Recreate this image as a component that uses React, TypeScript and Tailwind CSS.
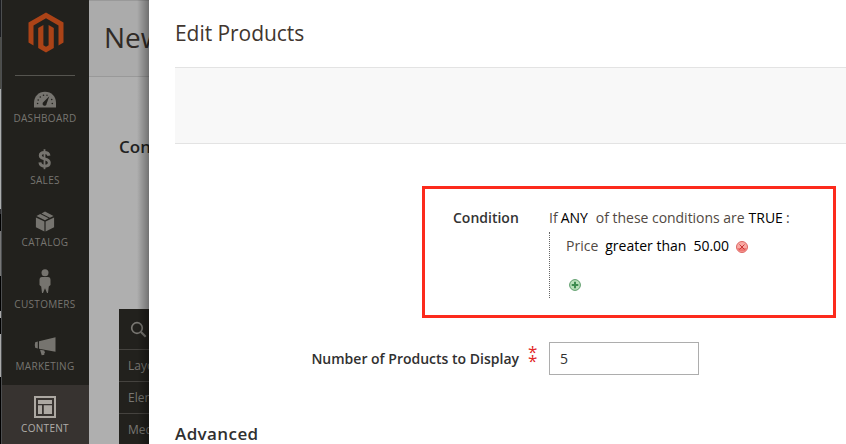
import type { ReactNode } from "react";

function NavItem({ label, active, children }: { label: string; active?: boolean; children: ReactNode }) {
  return (
    <li
      className={
        "flex h-[62px] flex-col items-center pr-px " + (active ? "bg-[#373330] text-[#aca8a2]" : "text-[#76746f]")
      }
    >
      <div className="flex h-[36px] w-full items-end justify-center">{children}</div>
      <span className={"text-[10px] leading-[14px] tracking-[0.3px] " + (active ? "text-[#b0aeaa]" : "text-[#777570]")}>
        {label}
      </span>
    </li>
  );
}

function Logo() {
  return (
    <svg width="36" height="41" viewBox="0 0 36 41" fill="#ab4317">
      <path d="M18 .5 35.500 10.500v20l-5 3V13.400L18 6.200 5.500 13.400v20.100l-5-3v-20z" />
      <path d="m10.200 16 5.200-2.900v20.200L18 34.800l2.600-1.500V13.100l5.200 2.900v20L18 40.500 10.200 36z" />
    </svg>
  );
}

function Sidebar() {
  return (
    <nav className="flex w-[87px] shrink-0 flex-col bg-[#22211d]">
      <div className="flex h-[75px] shrink-0 justify-center pt-[12px]">
        <Logo />
      </div>
      <div className="ml-[13px] h-px w-[60px] shrink-0 bg-[#55544f]" />
      <ul className="-mt-px flex shrink-0 flex-col">
        <NavItem label="DASHBOARD">
          <svg width="22" height="20" viewBox="0 0 22 20" fill="currentColor">
            <path d="M0 16.500V12C0 5.500 4.500.8 11 .8S22 5.500 22 12v4.500z" />
            <g fill="#22211d">
              <path d="m15.300 5.200-2.700 7.500a2 2 0 1 1-3.100-1.600z" />
              <circle cx="3.600" cy="12.500" r=".8" /><circle cx="4.200" cy="9" r=".8" />
              <circle cx="6.300" cy="6" r=".8" /><circle cx="9.500" cy="4.200" r=".8" />
              <circle cx="13" cy="4.200" r=".7" /><circle cx="17.700" cy="8.500" r=".8" />
              <circle cx="18.300" cy="12.500" r=".8" />
            </g>
          </svg>
        </NavItem>
        <NavItem label="SALES">
          <svg width="14" height="24" viewBox="0 0 14 24" fill="none" stroke="currentColor">
            <path d="M6.500 .2v20" strokeWidth="1.800" />
            <path d="M11 6.800C10.600 4.500 9 3.600 6.500 3.600c-2.600 0-4.200 1.100-4.200 3 0 2 1.500 2.700 4.300 3.300 3.100.7 4.700 1.600 4.700 3.900 0 2.200-1.900 3.400-4.700 3.400S2.200 16 1.900 13.400" strokeWidth="3" />
          </svg>
        </NavItem>
        <NavItem label="CATALOG">
          <svg width="20" height="24" viewBox="0 0 20 24" fill="currentColor">
            <path d="M.9 6.400 9.400 10.600v10L.9 16.200zM10.600 10.600l8.500-4.200v9.800l-8.500 4.400zM5.200 3l8.400 4.300-3.600 1.900L1.500 5zM10 .6 18.500 5l-3.600 1.700-8.400-4.300z" />
          </svg>
        </NavItem>
        <NavItem label="CUSTOMERS">
          <svg width="12" height="28" viewBox="0 0 12 28" fill="currentColor">
            <circle cx="6" cy="3.800" r="3.500" />
            <path d="M3 8h6q2.500.2 2.500 3v5L9.800 17.500 9 24H8L6 19.200 4 24H3l-.8-6.500L.5 16v-5Q.5 8.200 3 8z" />
          </svg>
        </NavItem>
        <NavItem label="MARKETING">
          <svg width="22" height="22" viewBox="0 0 22 22" fill="currentColor">
            <path d="M21.500.3v14.500L5 11.800V4.200zM3.800 4.500v7L1.200 10.700Q.4 8 1.200 5.300zM6 12.700l4.300.8L11 16l-1 .7.500 1-2.800.5z" />
          </svg>
        </NavItem>
        <NavItem label="CONTENT" active>
          <svg width="22" height="25" viewBox="0 0 22 25" fill="currentColor">
            <path fillRule="evenodd" d="M0 0h22v22H0zM2 2v18h18V2z" />
            <path d="M4 4h14v4H4zM4 9.300h4V18H4zM9.800 9.300H18V18H9.800z" />
          </svg>
        </NavItem>
      </ul>
    </nav>
  );
}

function BackgroundPage() {
  return (
    <main className="flex min-w-0 grow flex-col bg-[#afafaf]">
      <header className="h-[77px] border-t border-b border-t-[#999] border-b-[#999] bg-[#ababab] pl-[15px] pt-[16px] text-[28px] leading-[40px] text-[#302a26]">
        New Page
      </header>
      <h2 className="pl-[30px] pt-[58px] text-[17px] font-semibold leading-[24px] text-[#222]">Content</h2>
      <aside className="ml-[30px] mt-[150px] w-[200px] grow bg-[#22211d] text-[12px] text-[#797772]">
        <div className="flex h-[41px] border-b border-[#45433f] pl-[11px] pt-[12px]">
          <svg width="17" height="17" viewBox="0 0 17 17" fill="none" stroke="currentColor">
            <circle cx="7" cy="7" r="5.300" strokeWidth="1.700" />
            <path d="m11 11 4.700 4.700" strokeWidth="2.200" />
          </svg>
        </div>
        <div className="h-[32px] border-b border-[#45433f] pl-[9px] leading-[31px]">Layout</div>
        <div className="h-[32px] border-b border-[#45433f] pl-[9px] leading-[31px]">Elements</div>
        <div className="h-[30px] pl-[9px] leading-[31px]">Media</div>
      </aside>
    </main>
  );
}

function RemoveIcon() {
  return (
    <svg width="13" height="13" viewBox="0 0 13 13" className="ml-[6px] mt-[8px] shrink-0">
      <circle cx="7" cy="7" r="5.500" fill="#f9aaa4" stroke="#dc6764" />
      <path d="M2.200 8h9.600a5 5 0 0 1-9.600 0z" fill="#ef7773" />
      <path d="m4.500 4.500 5 5m0-5-5 5" stroke="#c93636" strokeWidth="1" />
    </svg>
  );
}

function AddIcon() {
  return (
    <svg width="12" height="12" viewBox="0 0 12 12">
      <circle cx="6" cy="6" r="5.400" fill="#b9dfba" stroke="#5b9b69" />
      <path d="M6 2.700v6.600M2.700 6h6.600" stroke="#3d8b4f" strokeWidth="2" />
    </svg>
  );
}

function ConditionBox() {
  return (
    <section className="ml-[273px] mt-[42px] flex h-[132px] w-[414px] shrink-0 border-[3px] border-[#fc2a1c] text-[14px] leading-[28px] whitespace-nowrap">
      <div className="w-[124px] shrink-0 pl-[28px] pt-[15px] font-semibold text-[#333]">Condition</div>
      <div className="pt-[15px] text-[#514943]">
        <p className="flex">
          <span>If</span>
          <span className="ml-[3px] text-black">ANY</span>
          <span className="ml-[8px] tracking-[-0.03px]">of these conditions are</span>
          <span className="ml-[4px] text-black">TRUE</span>
          <span className="ml-[3px]">:</span>
        </p>
        <div className="h-[66px] border-l border-dotted border-[#666]">
          <p className="flex pl-[16px]">
            <span>Price</span>
            <span className="ml-[7px] text-black">greater than</span>
            <span className="ml-[7px] text-black">50.00</span>
            <RemoveIcon />
          </p>
          <div className="pl-[19px] pt-[19px]">
            <AddIcon />
          </div>
        </div>
      </div>
    </section>
  );
}

function EditDialog() {
  return (
    <div
      role="dialog"
      className="absolute inset-y-0 left-[149px] right-0 flex flex-col overflow-hidden bg-white"
    >
      <h1 className="h-[67px] shrink-0 pl-[26px] pt-[18px] text-[21px] leading-[30px] tracking-[-0.05px] text-[#41362f]">Edit Products</h1>
      <div className="ml-[26px] h-[77px] shrink-0 border-y border-[#e3e3e3] bg-[#f8f8f8]" />
      <ConditionBox />
      <div className="mt-[24px] flex h-[33px] shrink-0 text-[14px] text-[#303030]">
        <label className="w-[370px] text-right font-semibold leading-[33px]">Number of Products to Display</label>
        <div className="ml-[9px] flex w-[21px] flex-col pt-[5px] text-[17px] leading-[9px] text-[#e22626]">
          <span>*</span>
          <span>*</span>
        </div>
        <input
          defaultValue="5"
          aria-label="Number of Products to Display"
          className="h-[33px] w-[150px] border border-[#adadad] bg-white px-[10px] text-[14px] text-[#303030] outline-none"
        />
      </div>
      <h2 className="ml-[26px] mt-[47px] shrink-0 text-[17px] font-semibold leading-[24px] tracking-[0.4px] text-[#303030]">Advanced</h2>
    </div>
  );
}

export default function App() {
  return (
    <div className="relative flex h-[444px] w-[846px] overflow-hidden font-['Open_Sans','Noto_Sans',sans-serif]">
      <div className="flex w-px shrink-0 flex-col bg-black">
        <div className="h-[37px] bg-[#1b1c20]" />
        <div className="h-[52px] bg-[#4c4d49]" />
        <div className="h-[120px] bg-[#acaeae]" />
        <div className="h-[5px] bg-[#303033]" />
        <div className="h-[17px] bg-black" />
        <div className="h-[45px] bg-[#777]" />
        <div className="h-[35px] bg-black" />
        <div className="h-[7px] bg-[#aaa]" />
        <div className="h-[16px] bg-black" />
        <div className="h-[43px] bg-[#aaa]" />
      </div>
      <div className="w-px shrink-0 bg-[#4c4e50]" />
      <Sidebar />
      <BackgroundPage />
      <div className="absolute inset-y-0 left-[137px] w-[12px] bg-linear-to-r from-transparent to-black/35" />
      <EditDialog />
    </div>
  );
}
